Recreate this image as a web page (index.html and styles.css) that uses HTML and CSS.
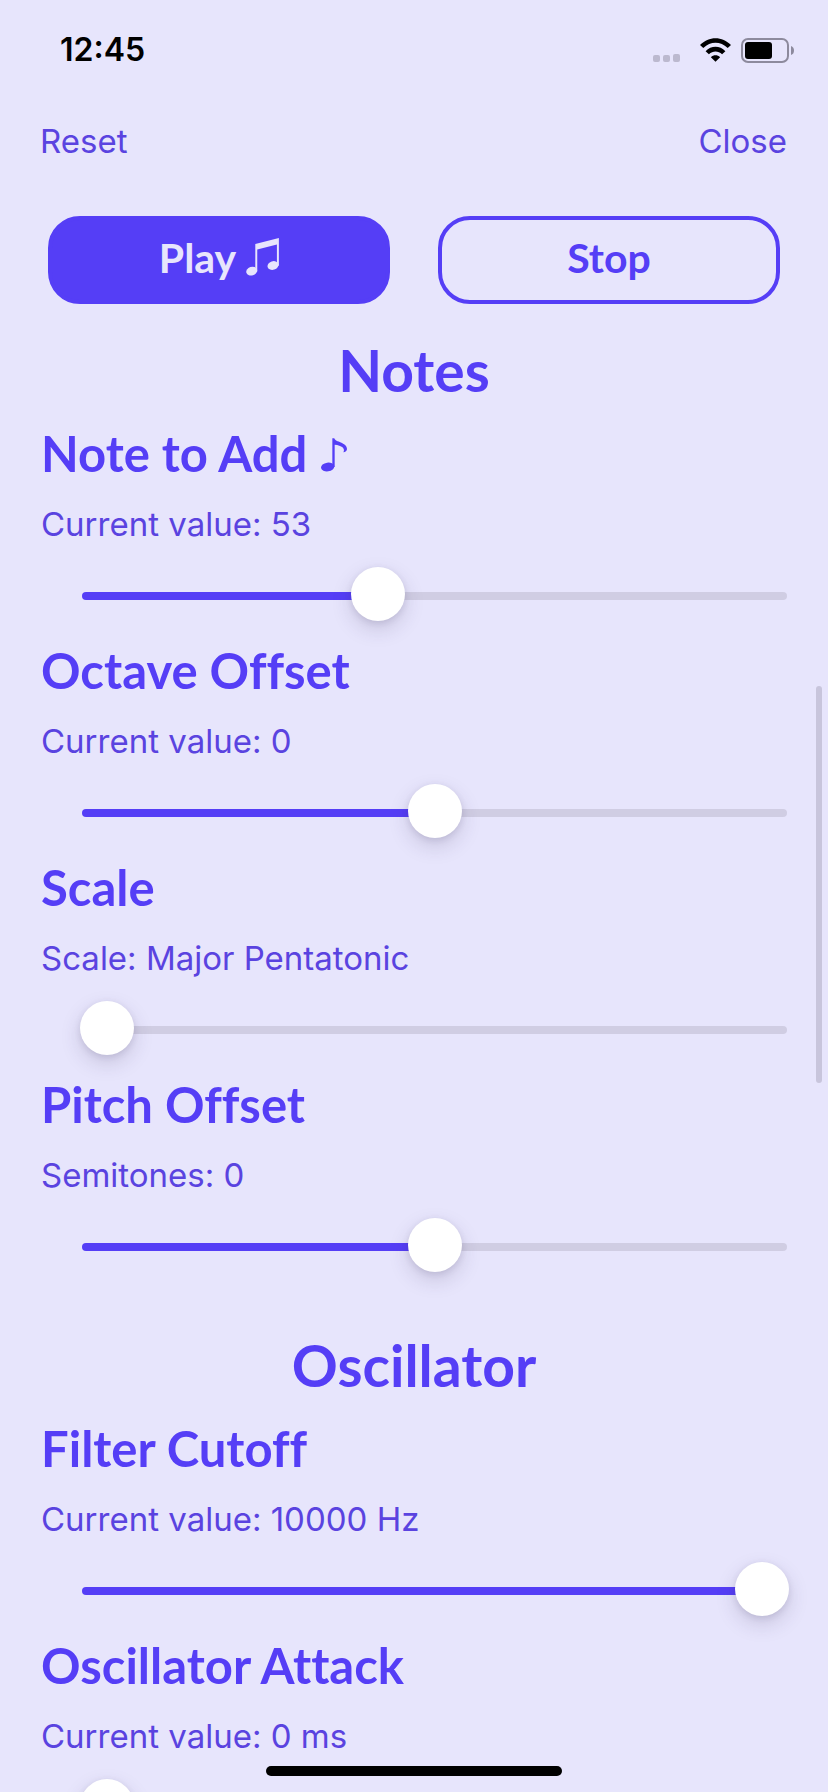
FILE: index.html
```html
<!DOCTYPE html>
<html lang="en">
<head>
<meta charset="utf-8">
<meta name="viewport" content="width=device-width, initial-scale=1">
<title>Synth settings</title>
<link rel="stylesheet" href="styles.css">
</head>
<body>
<div class="screen">
  <header class="status">
    <time class="clock">12:45</time>
    <div class="indicators">
      <svg class="signal" viewBox="0 0 27 8" aria-hidden="true"><rect x="0" y="1" width="7" height="7" rx="2"/><rect x="10" y="1" width="7" height="7" rx="2"/><rect x="20" y="0" width="7" height="8" rx="2"/></svg>
      <svg class="wifi" viewBox="0 0 94 72" aria-hidden="true"><path d="M0 21C26-7 68-7 94 21L84 30C62 9 32 9 10 30ZM17 40C34 22 60 22 77 40L67 49C55 38 39 38 27 49ZM33 58C41 50 53 50 61 58L47 72Z"/></svg>
      <svg class="battery" viewBox="0 0 53 25" aria-hidden="true"><rect class="case" x="1" y="1" width="46" height="23" rx="6"/><rect x="4" y="4" width="27" height="17" rx="3"/><path class="cap" d="M50 8q3 1 3 4.500t-3 4.500z"/></svg>
    </div>
  </header>

  <nav class="toolbar">
    <button class="link" type="button">Reset</button>
    <button class="link" type="button">Close</button>
  </nav>

  <div class="actions">
    <button class="action primary" type="button">Play
      <svg class="beamed" viewBox="0 0 100 116" aria-hidden="true"><path d="M28 18L100 0V85H94V20L34 35V102H28Z"/><ellipse cx="17" cy="101" rx="17" ry="13" transform="rotate(-18 17 101)"/><ellipse cx="82" cy="84" rx="17" ry="13" transform="rotate(-18 82 84)"/></svg>
    </button>
    <button class="action" type="button">Stop</button>
  </div>

  <main>
    <section class="group">
      <h2>Notes</h2>
      <div class="control">
        <h3><label for="note">Note to Add</label> <svg class="eighth" viewBox="0 0 78 100" aria-hidden="true"><path d="M34 0H40C42 12 78 12 78 32C78 37 73 42 67 42C74 30 62 21 41 19V86H34Z"/><ellipse cx="20" cy="86" rx="20" ry="13" transform="rotate(-8 20 86)"/></svg></h3>
        <p>Current value: 53</p>
        <input id="note" type="range" min="0" max="128" value="53" style="--fill:41%">
      </div>
      <div class="control">
        <h3><label for="octave">Octave Offset</label></h3>
        <p>Current value: 0</p>
        <input id="octave" type="range" min="-4" max="4" value="0" style="--fill:50%">
      </div>
      <div class="control">
        <h3><label for="scale">Scale</label></h3>
        <p>Scale: Major Pentatonic</p>
        <input id="scale" type="range" min="0" max="8" value="0" style="--fill:0%">
      </div>
      <div class="control">
        <h3><label for="pitch">Pitch Offset</label></h3>
        <p>Semitones: 0</p>
        <input id="pitch" type="range" min="-12" max="12" value="0" style="--fill:50%">
      </div>
    </section>
    <section class="group">
      <h2>Oscillator</h2>
      <div class="control">
        <h3><label for="cutoff">Filter Cutoff</label></h3>
        <p>Current value: 10000 Hz</p>
        <input id="cutoff" type="range" min="0" max="10000" value="10000" style="--fill:100%">
      </div>
      <div class="control">
        <h3><label for="attack">Oscillator Attack</label></h3>
        <p>Current value: 0 ms</p>
        <input id="attack" type="range" min="0" max="1000" value="0" style="--fill:0%">
      </div>
    </section>
  </main>
  <div class="scroll-indicator"></div>
  <div class="home-indicator"></div>
</div>
</body>
</html>
```
FILE: styles.css
```css
:root {
  --bg: #e7e5fc;
  --accent: #553ef6;
  --text: #5a43e0;
  --track: #d0cde3;
}

* {
  box-sizing: border-box;
}

body {
  margin: 0;
  background: var(--bg);
  color: var(--accent);
  font-family: Lato, sans-serif;
  font-variant-ligatures: none;
}

.screen {
  position: relative;
  height: 100vh;
  overflow: hidden;
}

.status {
  display: flex;
  align-items: center;
  justify-content: space-between;
  height: 100px;
  padding: 0 34px 0 60px;
  color: #000;
}

.clock {
  font: 600 32px/40px Inter, sans-serif;
}

.indicators {
  display: flex;
  align-items: flex-end;
}

.signal {
  width: 27px;
  height: 8px;
  margin: 0 20px 1px 0;
  fill: #bcb9cf;
}

.wifi {
  width: 31px;
  height: 24px;
  margin: 0 10px 1px 0;
}

.battery {
  width: 53px;
  height: 25px;
}

.battery .case {
  fill: none;
  stroke: #8d8a9d;
  stroke-width: 2;
}

.battery .cap {
  fill: #8d8a9d;
}

.toolbar {
  display: flex;
  justify-content: space-between;
  padding: 21px 41px 0 40px;
}

button {
  font-family: inherit;
  cursor: pointer;
}

.link,
p {
  color: var(--text);
  font-family: Inter, sans-serif;
  font-size: 33px;
  font-weight: 400;
  line-height: 40px;
}

.link {
  padding: 0;
  border: 0;
  background: none;
}

.actions {
  display: grid;
  grid-template-columns: 1fr 1fr;
  gap: 48px;
  padding: 55px 48px 0;
}

.action {
  display: flex;
  align-items: center;
  justify-content: center;
  gap: 10px;
  height: 88px;
  padding: 0 0 4px;
  border: 4px solid var(--accent);
  border-radius: 32px;
  background: none;
  color: var(--accent);
  font-size: 41px;
  font-weight: 700;
  line-height: 48px;
}

.primary {
  background: var(--accent);
  color: var(--bg);
}

.beamed {
  width: 33px;
  height: 38px;
  margin-bottom: 2px;
  fill: currentColor;
}

.group {
  padding: 34px 41px 0 41px;
}

.group + .group {
  padding-top: 82px;
}

h2,
h3,
p {
  margin: 0;
}

h2 {
  margin-bottom: 23px;
  font-size: 57px;
  line-height: 64px;
  text-align: center;
}

.control + .control {
  margin-top: 42px;
}

h3 {
  font-size: 49px;
  line-height: 56px;
}

.eighth {
  width: 26px;
  height: 34px;
  margin-left: 2px;
  fill: currentColor;
}

p {
  margin: 23px 0 48px;
}

input[type="range"] {
  display: block;
  width: calc(100% - 41px);
  height: 8px;
  margin: 0 0 0 41px;
  appearance: none;
  border-radius: 4px;
  background: linear-gradient(to right, var(--accent) var(--fill), var(--track) 0);
  cursor: pointer;
}

input[type="range"]::-webkit-slider-runnable-track {
  height: 8px;
  margin: 0 -2px;
}

input[type="range"]::-webkit-slider-thumb {
  width: 54px;
  height: 54px;
  margin-top: -25px;
  appearance: none;
  border-radius: 50%;
  background: #fff;
  box-shadow: 0 8px 20px rgb(60 50 90 / 18%), 0 2px 6px rgb(60 50 90 / 12%);
}

.scroll-indicator {
  position: absolute;
  top: 686px;
  right: 6px;
  width: 6px;
  height: 397px;
  border-radius: 3px;
  background: #c8c5dc;
}

.home-indicator {
  position: absolute;
  bottom: 16px;
  left: 50%;
  width: 296px;
  height: 10px;
  border-radius: 5px;
  background: #000;
  transform: translateX(-50%);
}
```
